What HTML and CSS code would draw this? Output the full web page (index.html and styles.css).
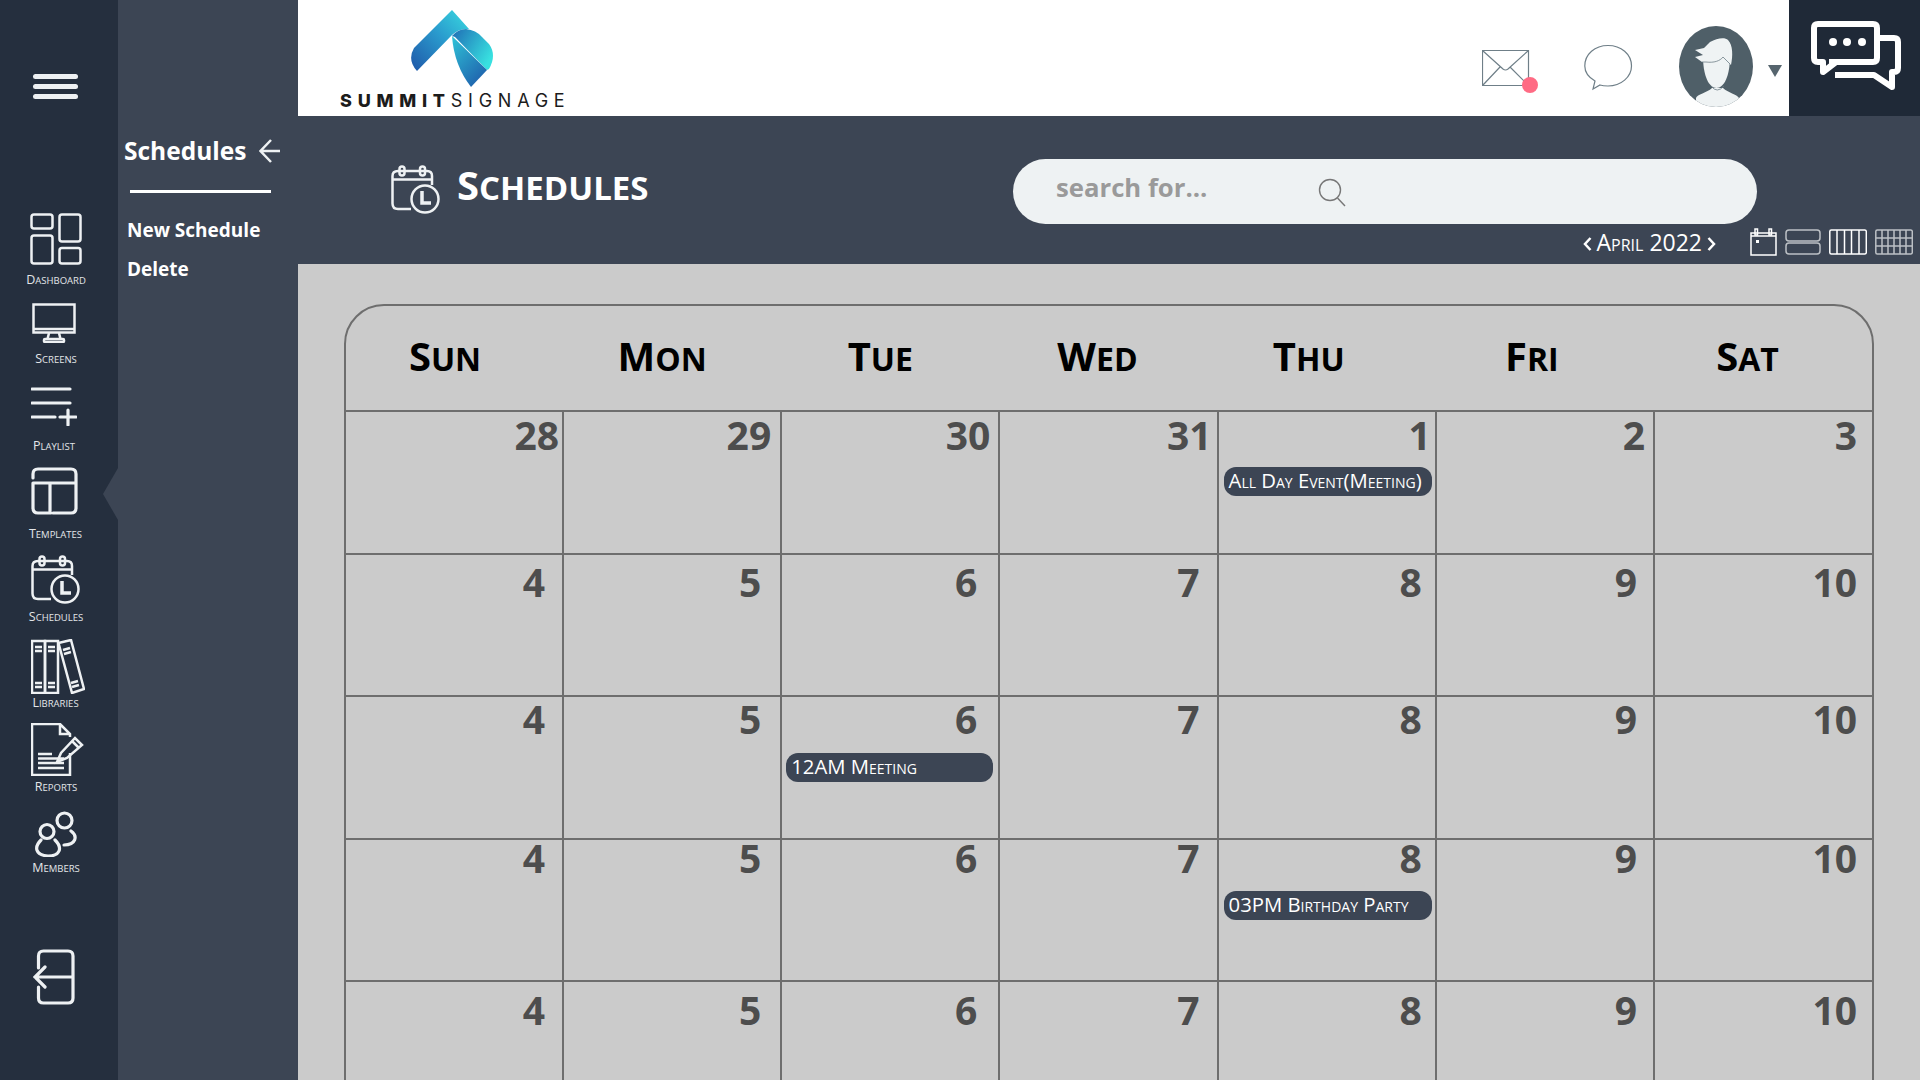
FILE: index.html
```html
<!DOCTYPE html>
<html lang="en">
<head>
<meta charset="UTF-8"/>
<title>Schedules</title>
<link rel="stylesheet" href="styles.css">
</head>
<body>
<svg class="defs" width="0" height="0">
	<defs>
		<symbol id="ico-schedule" viewBox="0 0 49 49">
			<path d="M20 44H7Q1.5 44 1.5 38.500V11Q1.500 6 7 6H36Q41 6 41 11V20M1.500 14.500H41"/>
			<rect x="8.500" y="1.500" width="5" height="9" rx="2.500"/>
			<rect x="29" y="1.500" width="5" height="9" rx="2.500"/>
			<circle cx="34" cy="34" r="13.500"/>
			<path class="thick" d="M31 26V38H40"/>
		</symbol>
		<linearGradient id="wing-left" x1="0" y1="1" x2="1" y2="0">
			<stop offset="0" stop-color="#1f57a8"/>
			<stop offset=".55" stop-color="#2a9cce"/>
			<stop offset="1" stop-color="#39dbe0"/>
		</linearGradient>
		<linearGradient id="wing-right" x1="0" y1="0" x2="1" y2=".6">
			<stop offset="0" stop-color="#1f6db5"/>
			<stop offset="1" stop-color="#38e0e0"/>
		</linearGradient>
		<linearGradient id="wing-low" x1="0" y1="0" x2=".7" y2="1">
			<stop offset="0" stop-color="#2fc4d8"/>
			<stop offset="1" stop-color="#1f62ad"/>
		</linearGradient>
		<clipPath id="avatar-clip"><ellipse cx="37" cy="40.500" rx="37" ry="40.500"/></clipPath>
	</defs>
</svg>

<aside class="rail">
	<button class="burger"><span></span><span></span><span></span></button>
	<nav class="rail-nav">
		<a class="rail-item it-dashboard">
			<svg class="ico" width="52" height="52" viewBox="0 0 52 52"><rect x="1.500" y="1.500" width="21" height="14" rx="2.500"/><rect x="29.500" y="1.500" width="21" height="27" rx="2.500"/><rect x="1.500" y="22.500" width="21" height="28" rx="2.500"/><rect x="29.500" y="35" width="21" height="15.500" rx="2.500"/></svg>
			<span>Dashboard</span>
		</a>
		<a class="rail-item it-screens">
			<svg class="ico" width="44" height="40" viewBox="0 0 44 40"><rect x="1.500" y="1.500" width="41" height="28"/><path d="M1.500 26H42.500M17 30L15.500 36M27 30L28.500 36"/><rect x="12" y="36" width="20" height="3" rx="1"/></svg>
			<span>Screens</span>
		</a>
		<a class="rail-item it-playlist">
			<svg class="ico thick" width="46" height="40" viewBox="0 0 46 40"><path d="M1 3H39M1 17H39M1 31H24M29 31H45M37 24V39"/></svg>
			<span>Playlist</span>
		</a>
		<a class="rail-item it-templates">
			<svg class="ico thick" width="47" height="48" viewBox="0 0 47 48"><path d="M2 11V7Q2 2 7 2H40Q45 2 45 7V41Q45 46 40 46H22M2 16V41Q2 46 7 46H19V16M2 16H45"/></svg>
			<span>Templates</span>
		</a>
		<a class="rail-item it-schedules">
			<svg class="ico" width="49" height="49"><use href="#ico-schedule"/></svg>
			<span>Schedules</span>
		</a>
		<a class="rail-item it-libraries">
			<svg class="ico" width="54" height="55" viewBox="0 0 54 55"><rect x="1" y="2" width="13" height="52"/><rect x="14" y="2" width="13" height="52"/><path d="M27.500 4L40 1L53 50L41 54ZM4 8H11M4 12H11M17 8H24M17 12H24M4 44H11M4 48H11M17 44H24M17 48H24M32 11L39 9M33 15L40 13M40 44L47 42M41 48L48 46"/></svg>
			<span>Libraries</span>
		</a>
		<a class="rail-item it-reports">
			<svg class="ico" width="53" height="53" viewBox="0 0 53 53"><path d="M39 30V52H1V1H29L39 11V14M29 1V11H39M7 31H21M7 35.500H33M7 40H33M7 45H33"/><path d="M26 39L30 30L44 15L51 22L36 35ZM41 18L48 25"/></svg>
			<span>Reports</span>
		</a>
		<a class="rail-item it-members">
			<svg class="ico thick" width="44" height="46" viewBox="0 0 44 46"><circle cx="13" cy="20.500" r="7"/><circle cx="30.500" cy="9.500" r="7.500"/><path d="M7 29C0 36 1 44 14 45C26 45 29 37 21 29M37 20C44 25 42 34 30 34"/></svg>
			<span>Members</span>
		</a>
	</nav>
	<a class="rail-logout">
		<svg class="ico thick" width="42" height="56" viewBox="0 0 42 56"><path d="M5.500 19V7Q5.500 2 10.500 2H35Q40 2 40 7V49Q40 54 35 54H10.500Q5.500 54 5.500 49V38M2 28H40M12 18L2 28L12 38"/></svg>
	</a>
	<i class="rail-notch"></i>
</aside>

<aside class="side">
	<div class="side-head">
		<span>Schedules</span>
		<svg class="ico" width="22" height="24" viewBox="0 0 22 24"><path d="M12 1L1.500 12L12 23M1.500 12H21"/></svg>
	</div>
	<div class="side-line"></div>
	<a class="side-link">New Schedule</a>
	<a class="side-link">Delete</a>
</aside>

<main class="main">
	<header class="top">
		<div class="logo">
			<svg class="logo-mark" width="84" height="78" viewBox="410 10 84 78">
				<path fill="url(#wing-left)" d="M452 10L469 29Q459 28 452 35L417 71Q407 60 414 48Z"/>
				<path fill="url(#wing-right)" d="M452 36Q458 29 466 29Q476 30 482 37L489 44Q497 55 489 69L487 70L455 37Z"/>
				<path fill="url(#wing-low)" d="M452 36L487 70L471 87Q454 65 452 36Z"/>
			</svg>
			<div class="logo-text"><b>SUMMIT</b>SIGNAGE</div>
		</div>
		<div class="top-icons">
			<svg class="top-mail" width="57" height="44" viewBox="0 0 57 44"><path d="M.5 .5H46.500V35.500H.5ZM.5 .5L21 19Q23.500 21 26 19L46.500 .5M1 35L18 17M46 35L28 17"/><circle cx="48" cy="35" r="8"/></svg>
			<svg class="top-bubble" width="49" height="47" viewBox="0 0 49 47"><path d="M11 37C4 33 .8 27 .8 22C.8 10 11 1.500 24 1.500C37 1.500 47.500 10 47.500 22C47.500 33 37 42 24 42C21 42 19 42 16 41L9 45Z"/></svg>
			<svg class="top-avatar" width="74" height="81" viewBox="0 0 74 81">
				<ellipse cx="37" cy="40.500" rx="37" ry="40.500" fill="#4f5f68"/>
				<g clip-path="url(#avatar-clip)" fill="#eff3f4">
					<path d="M17 81V72C18 68 28 67 33 62H44C49 67 58 68 60 72V81Z"/>
					<path d="M24 30C24 50 30 62 37.500 62C45 62 51 50 51 30Z"/>
					<path d="M31 16C38 12 46 11 49 14C54 19 54 30 52 39L44 31C41 35 35 37 27 36L23 36L16 31L24 29L16 24L25 22Z"/>
					<path class="avatar-lines" d="M23 36L27 36C35 37 41 35 44 31L51 38M32 60Q38 68 45 60"/>
				</g>
			</svg>
			<i class="top-caret"></i>
		</div>
		<div class="top-chat">
			<svg width="92" height="72" viewBox="0 0 92 72"><path d="M19 42H63Q67 42 67 38V8Q67 4 63 4H8Q4 4 4 8V38Q4 42 8 42H13V52L26 42M68 18H84Q88 18 88 22V48Q88 52 84 52H82V67L64 55H25"/><circle cx="23" cy="22" r="4"/><circle cx="37" cy="22" r="4"/><circle cx="52" cy="22" r="4"/></svg>
		</div>
	</header>

	<section class="band">
		<div class="band-top">
			<div class="page-title">
				<svg class="ico" width="49" height="49"><use href="#ico-schedule"/></svg>
				<h1>Schedules</h1>
			</div>
			<div class="search">
				<span class="search-text">search for...</span>
				<svg width="28" height="29" viewBox="0 0 28 29"><circle cx="12" cy="12" r="10.500"/><path d="M19.500 20L27 28"/></svg>
			</div>
		</div>
		<div class="band-tools">
			<div class="month">
				<svg width="9" height="14" viewBox="0 0 9 14"><path d="M7.500 1L2 7L7.500 13"/></svg>
				<span>April 2022</span>
				<svg width="9" height="14" viewBox="0 0 9 14"><path d="M1.500 1L7 7L1.500 13"/></svg>
			</div>
			<svg class="view view-on" width="27" height="28" viewBox="0 0 27 28"><path d="M1 5H26V27H1ZM1 8H26"/><rect x="5" y="1" width="2.500" height="6"/><rect x="19" y="1" width="2.500" height="6"/><rect class="dot" x="6" y="12" width="3" height="3"/></svg>
			<svg class="view view-dim" width="36" height="28" viewBox="0 0 36 28"><rect x="1" y="2" width="34" height="11" rx="3"/><rect x="1" y="15" width="34" height="11" rx="3"/></svg>
			<svg class="view view-on" width="38" height="28" viewBox="0 0 38 28"><rect x=".8" y="2" width="36.500" height="24" rx="1.500"/><path d="M8 2V26M15.500 2V26M22.500 2V26M30 2V26"/></svg>
			<svg class="view view-dim" width="38" height="28" viewBox="0 0 38 28"><rect x=".8" y="2" width="36.500" height="24" rx="1.500"/><path d="M7 2V26M13 2V26M19 2V26M25 2V26M31 2V26M1 10H37M1 18H37"/></svg>
		</div>
	</section>

	<section class="content">
		<div class="cal">
			<div class="cal-head">
				<div>Sun</div><div>Mon</div><div>Tue</div><div>Wed</div><div>Thu</div><div>Fri</div><div>Sat</div>
			</div>
			<div class="cal-row row-a">
				<div><b>28</b></div><div><b>29</b></div><div><b>30</b></div><div><b>31</b></div>
				<div><b>1</b><span class="event">All Day Event(Meeting)</span></div>
				<div><b>2</b></div><div><b>3</b></div>
			</div>
			<div class="cal-row row-b">
				<div><b>4</b></div><div><b>5</b></div><div><b>6</b></div><div><b>7</b></div><div><b>8</b></div><div><b>9</b></div><div><b>10</b></div>
			</div>
			<div class="cal-row row-c">
				<div><b>4</b></div><div><b>5</b></div>
				<div><b>6</b><span class="event">12AM Meeting</span></div>
				<div><b>7</b></div><div><b>8</b></div><div><b>9</b></div><div><b>10</b></div>
			</div>
			<div class="cal-row row-d">
				<div><b>4</b></div><div><b>5</b></div><div><b>6</b></div><div><b>7</b></div>
				<div><b>8</b><span class="event">03PM Birthday Party</span></div>
				<div><b>9</b></div><div><b>10</b></div>
			</div>
			<div class="cal-row row-e">
				<div><b>4</b></div><div><b>5</b></div><div><b>6</b></div><div><b>7</b></div><div><b>8</b></div><div><b>9</b></div><div><b>10</b></div>
			</div>
		</div>
	</section>
</main>
</body>
</html>
```
FILE: styles.css
```css
* {
	box-sizing: border-box;
}
html, body {
	margin: 0;
	height: 100%;
}
body {
	display: flex;
	width: 1920px;
	height: 1080px;
	overflow: hidden;
	font-family: "Open Sans", "Noto Sans", sans-serif;
	background: #cbcbcb;
}
.defs {
	position: absolute;
}
.ico, .ico use {
	fill: none;
	stroke: #eef1f3;
	stroke-width: 2.5;
}
symbol * {
	fill: none;
	stroke: #eef1f3;
	stroke-width: 2.5;
}
symbol .thick {
	stroke-width: 3.5;
}
.ico.thick {
	stroke-width: 3.2;
	stroke-linecap: round;
}

/* left rail */
.rail {
	position: relative;
	flex: none;
	width: 118px;
	background: #252f3e;
	display: flex;
	flex-direction: column;
	align-items: center;
}
.burger {
	display: flex;
	flex-direction: column;
	gap: 5px;
	width: 45px;
	margin: 74px 0 0 -7px;
	padding: 0;
	border: none;
	background: none;
}
.burger span {
	display: block;
	height: 5px;
	border-radius: 3px;
	background: #eef1f3;
}
.rail-nav {
	margin-top: 114px;
	display: flex;
	flex-direction: column;
	align-items: center;
	width: 100%;
	padding-right: 7px;
}
.rail-item {
	display: flex;
	flex-direction: column;
	align-items: center;
	color: #e3e6e9;
	font-size: 9.500px;
	line-height: 14px;
	text-transform: uppercase;
}
.rail-item svg {
	display: block;
}
.rail-item span {
	margin-top: 8px;
	margin-left: 1px;
}
.rail-item span::first-letter {
	font-size: 12.500px;
}
.it-dashboard { height: 90px; }
.it-screens { height: 83px; margin-left: -2px; }
.it-screens span { margin-top: 9px; margin-left: 3px; }
.it-playlist { height: 81px; margin-left: -3px; }
.it-playlist span { margin-top: 13px; margin-left: 0; }
.it-templates { height: 88px; margin-left: -3px; }
.it-templates span { margin-top: 12px; margin-left: 3px; }
.it-schedules { height: 84px; }
.it-schedules span { margin-top: 6px; }
.it-schedules svg { margin-left: -1px; }
.it-libraries { height: 84px; margin-left: 1px; }
.it-libraries span { margin-top: 2px; margin-left: -1px; }
.it-libraries svg { margin-left: 3px; }
.it-reports { height: 88px; }
.it-reports span { margin-top: 4px; }
.it-reports svg { margin-left: 3px; }
.it-members span { margin-top: 4px; }
.rail-logout {
	margin-top: 73px;
	margin-left: -11px;
}
.rail-notch {
	position: absolute;
	left: 103px;
	top: 468px;
	border-style: solid;
	border-width: 26px 15px 26px 0;
	border-color: transparent #3c4554 transparent transparent;
}

/* schedules panel */
.side {
	flex: none;
	width: 180px;
	background: #3c4554;
	color: #fff;
	font-weight: 700;
}
.side-head {
	display: flex;
	align-items: center;
	gap: 13px;
	margin: 134px 0 0 6px;
	font-size: 24.500px;
	line-height: 34px;
}
.side-line {
	width: 141px;
	height: 3px;
	margin: 22px 0 0 12px;
	background: #fff;
}
.side-link {
	display: block;
	margin-left: 9px;
	font-size: 19px;
	line-height: 39px;
}
.side-line + .side-link {
	margin-top: 18px;
}

/* top bar */
.main {
	flex: 1;
	min-width: 0;
	display: flex;
	flex-direction: column;
}
.top {
	display: flex;
	flex: none;
	height: 116px;
	background: #fff;
}
.logo {
	width: 226px;
	margin-left: 42px;
	padding-top: 10px;
}
.logo-mark {
	display: block;
	margin-left: 70px;
}
.logo-text {
	margin-top: 2px;
	font-family: "Inter", "Liberation Sans", sans-serif;
	font-size: 18px;
	line-height: 22px;
	letter-spacing: 5.750px;
	color: #1c1c1c;
	white-space: nowrap;
}
.logo-text b {
	font-weight: 800;
}
.top-icons {
	flex: 1;
	display: flex;
	justify-content: flex-end;
	align-items: flex-start;
}
.top-mail {
	margin-top: 50px;
	fill: none;
	stroke: #6f7f88;
	stroke-width: 1.2;
}
.top-mail circle {
	fill: #ff6b84;
	stroke: none;
}
.top-bubble {
	margin: 44px 0 0 45px;
	fill: none;
	stroke: #6f7f88;
	stroke-width: 1.2;
}
.top-avatar {
	margin: 26px 1px 0 46px;
}
.avatar-lines {
	fill: none;
	stroke: #6f7f88;
	stroke-width: .8;
}
.top-caret {
	margin: 65px 7px 0 14px;
	border-style: solid;
	border-width: 12px 7.500px 0 7.500px;
	border-color: #56656e transparent transparent transparent;
}
.top-chat {
	flex: none;
	width: 131px;
	padding: 20px 0 0 21px;
	background: #1f2937;
}
.top-chat svg {
	fill: none;
	stroke: #fff;
	stroke-width: 6;
	stroke-linejoin: round;
}
.top-chat circle {
	fill: #fff;
	stroke: none;
}

/* title band */
.band {
	flex: none;
	height: 148px;
	background: #3c4554;
}
.band-top {
	display: flex;
	align-items: center;
	height: 65px;
	margin-top: 43px;
}
.page-title {
	flex: none;
	display: flex;
	align-items: center;
	gap: 17px;
	width: 715px;
	margin-top: -5px;
	padding-left: 93px;
	color: #fff;
}
.page-title h1 {
	margin: -6px 0 0;
	font-size: 33px;
	line-height: 50px;
	font-weight: 700;
	text-transform: uppercase;
}
.page-title h1::first-letter {
	font-size: 40px;
}
.search {
	display: flex;
	align-items: center;
	width: 744px;
	height: 65px;
	padding-left: 43px;
	border-radius: 33px;
	background: #eef2f3;
}
.search-text {
	width: 262px;
	margin-top: -8px;
	color: #9a9a9a;
	font-size: 25.700px;
	font-weight: 700;
}
.search svg {
	margin-top: 1px;
	fill: none;
	stroke: #777;
	stroke-width: 1.4;
}
.band-tools {
	display: flex;
	justify-content: flex-end;
	align-items: center;
	gap: 8px;
	height: 28px;
	margin-top: 4px;
	padding-right: 7px;
}
.month {
	display: flex;
	align-items: center;
	gap: 5px;
	margin-right: 26px;
	color: #fff;
	font-size: 23px;
	line-height: 30px;
	font-variant: small-caps;
}
.month svg {
	margin-top: 3px;
	fill: none;
	stroke: #fff;
	stroke-width: 2.500;
}
.view {
	fill: none;
	stroke-width: 1.5;
}
.view-on {
	stroke: #fff;
}
.view-dim {
	stroke: #bcc0c5;
}
.view .dot {
	fill: #fff;
	stroke: none;
}

/* calendar */
.content {
	flex: 1;
	min-height: 0;
	padding: 40px 0 0 46px;
	background: #cbcbcb;
}
.cal {
	width: 1530px;
	height: 900px;
	border: 2px solid #6e6e6e;
	border-radius: 40px 40px 0 0;
}
.cal-head {
	display: grid;
	grid-template-columns: 216px repeat(5, 218.200px) minmax(0, 1fr);
	height: 104px;
	color: #000;
	font-size: 32px;
	line-height: 100px;
	font-weight: 700;
	text-transform: uppercase;
	text-align: center;
}
.cal-head div::first-letter {
	font-size: 40px;
}
.cal-head div:nth-child(1) { padding-right: 18px; }
.cal-head div:nth-child(2) { padding-right: 18px; }
.cal-head div:nth-child(3) { padding-right: 18px; }
.cal-head div:nth-child(4) { padding-right: 20px; }
.cal-head div:nth-child(5) { padding-right: 34px; }
.cal-head div:nth-child(6) { padding-right: 24px; }
.cal-head div:nth-child(7) { padding-right: 30px; }
.cal-row {
	display: grid;
	grid-template-columns: 216px repeat(5, 218.200px) minmax(0, 1fr);
	height: 142.500px;
	border-top: 2px solid #6e6e6e;
}
.cal-row > div {
	padding-right: 16px;
	border-left: 2px solid #6e6e6e;
	text-align: right;
}
.cal-row > div:first-child {
	border-left: none;
	padding-right: 17px;
}
.cal-row b {
	display: block;
	color: #4d4d4d;
	font-size: 39px;
	line-height: 35px;
	font-weight: 700;
}
.cal-row > div:nth-child(2) { padding-right: 19px; }
.cal-row > div:nth-child(3) { padding-right: 21px; }
.cal-row > div:nth-child(4) { padding-right: 17px; }
.cal-row > div:nth-child(5) { padding-right: 13px; }
.cal-row > div:nth-child(7) { padding-right: 15px; }
.row-a > div:nth-child(1) { padding-right: 3px; }
.row-a > div:nth-child(2) { padding-right: 9px; }
.row-a > div:nth-child(3) { padding-right: 8px; }
.row-a > div:nth-child(4) { padding-right: 5px; }
.row-a > div:nth-child(5) { padding-right: 4px; }
.row-a > div:nth-child(6) { padding-right: 8px; }
.row-a > div:nth-child(7) { padding-right: 15px; }
.row-a > div { padding-top: 5px; }
.row-b > div { padding-top: 9px; }
.row-c > div { padding-top: 4px; }
.row-d > div { padding-top: 0; }
.row-e > div { padding-top: 10px; }
.event {
	display: block;
	width: 208px;
	height: 29px;
	margin: 15px 0 0 5px;
	padding-left: 5px;
	border-radius: 12px;
	background: #3c4554;
	color: #fff;
	font-size: 20.300px;
	line-height: 27px;
	font-variant: small-caps;
	text-align: left;
	white-space: nowrap;
}
.row-c .event { margin: 17px 0 0 4px; width: 207px; }
.row-d .event { margin-top: 16px; }
```
